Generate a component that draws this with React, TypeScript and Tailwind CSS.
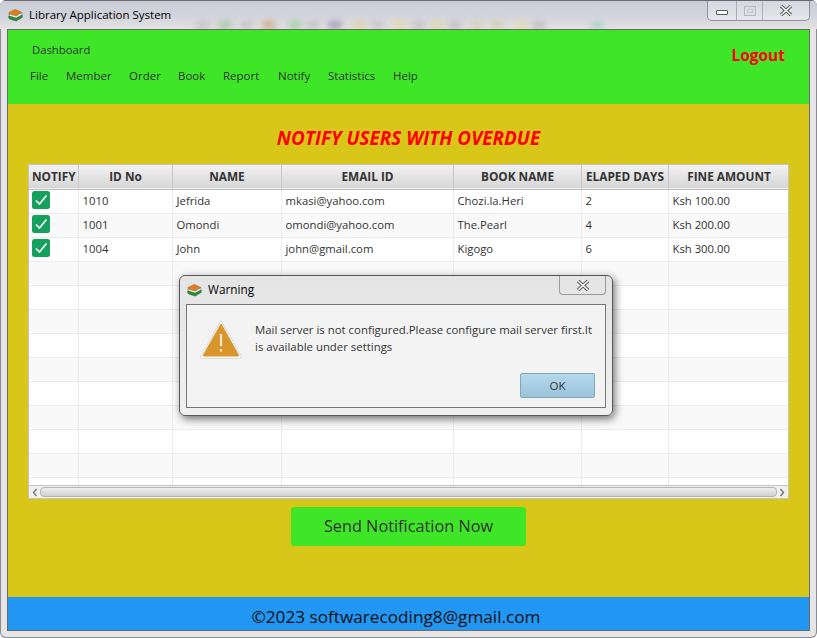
import React from 'react';

const columns = [
  { label: 'NOTIFY', width: 'w-[49px]' },
  { label: 'ID No', width: 'w-[94px]' },
  { label: 'NAME', width: 'w-[109px]' },
  { label: 'EMAIL ID', width: 'w-[172px]' },
  { label: 'BOOK NAME', width: 'w-[128px]' },
  { label: 'ELAPED DAYS', width: 'w-[87px]' },
  { label: 'FINE AMOUNT', width: 'w-[121px]' },
];

const rows = [
  ['1010', 'Jefrida', 'mkasi@yahoo.com', 'Chozi.la.Heri', '2', 'Ksh 100.00'],
  ['1001', 'Omondi', 'omondi@yahoo.com', 'The.Pearl', '4', 'Ksh 200.00'],
  ['1004', 'John', 'john@gmail.com', 'Kigogo', '6', 'Ksh 300.00'],
];

const menu = [
  { label: 'File', width: 'w-[36px]' },
  { label: 'Member', width: 'w-[63px]' },
  { label: 'Order', width: 'w-[49px]' },
  { label: 'Book', width: 'w-[45px]' },
  { label: 'Report', width: 'w-[55px]' },
  { label: 'Notify', width: 'w-[50px]' },
  { label: 'Statistics', width: 'w-[65px]' },
  { label: 'Help', width: 'w-[40px]' },
];

// blurred desktop showing through the glass title bar
const glassBlobs = [
  'left-[196px] bg-[#b9b9b9]',
  'left-[218px] bg-[#8fc08f]',
  'left-[240px] bg-[#bdbdbd]',
  'left-[262px] bg-[#c99b6c]',
  'left-[288px] bg-[#90c890]',
  'left-[306px] bg-[#b9b9b9]',
  'left-[328px] bg-[#8f86a8]',
  'left-[352px] bg-[#e0cc94]',
  'left-[370px] bg-[#bdbdbd]',
  'left-[392px] bg-[#e6d49a]',
  'left-[412px] bg-[#b9b9b9]',
  'left-[430px] bg-[#e0d098]',
  'left-[448px] bg-[#b4b4b4]',
  'left-[470px] bg-[#d4cfa0]',
  'left-[490px] bg-[#cfc99c]',
  'left-[514px] bg-[#e6d8a4]',
  'left-[532px] bg-[#b4b4b4]',
  'left-[590px] bg-[#a4cfc0]',
];

const BookIcon = () => (
  <svg width="15" height="13" viewBox="0 0 15 13" className="shrink-0">
    <path d="M1 3.5 L6.5 0.8 Q7.5 0.4 8.5 0.9 L14 3.6 L8.2 7 L1 5.5 Z" fill="#e07f1f" stroke="#a35a14" strokeWidth="0.5" />
    <path d="M1 5 L8.2 7 L14 3.8 L14 6 L8.2 9.2 L1.4 7.4 Z" fill="#f3f2ea" stroke="#5c6a5c" strokeWidth="0.4" />
    <path d="M0.8 7 L8.2 9.2 L14.2 6 L14.2 8.4 L8.2 12 L1.6 10 Q0.2 8.6 0.8 7 Z" fill="#2c8f3f" stroke="#175a25" strokeWidth="0.5" />
  </svg>
);

const Check = () => (
  <svg width="18" height="18" viewBox="0 0 18 18" className="block">
    <rect width="18" height="18" rx="2.5" fill="#16a05d" />
    <path d="M4 9.5 L7.5 13 L14.5 4.5" fill="none" stroke="#fff" strokeWidth="1.6" />
  </svg>
);

const WarningIcon = () => (
  <svg width="44" height="41" viewBox="0 0 44 41">
    <path d="M22 1.5 L42.5 37 Q43 39.5 40.5 39.5 L3.5 39.5 Q1 39.5 1.5 37 Z" fill="#f9f8f5" stroke="#d9d9d9" strokeWidth="1" strokeLinejoin="round" />
    <path d="M22 5 L39.5 36 Q40 37 39 37 L5 37 Q4 37 4.5 36 Z" fill="#d8952c" stroke="#d8952c" strokeWidth="1" strokeLinejoin="round" />
    <rect x="20.9" y="15" width="2.2" height="12" fill="#f6e7cc" />
    <rect x="20.9" y="30" width="2.2" height="2.6" fill="#f6e7cc" />
  </svg>
);

const CloseGlyph = () => (
  <svg width="14" height="11" viewBox="0 0 14 11">
    <path d="M2 1 L12 10 M12 1 L2 10" stroke="#555" strokeWidth="3.4" />
    <path d="M2 1 L12 10 M12 1 L2 10" stroke="#fff" strokeWidth="1.6" />
  </svg>
);

export default function App() {
  const blankRows = Array.from({ length: 10 });

  return (
    <div className="relative w-[817px] h-[638px] overflow-hidden rounded-[6px] bg-[#e6e6e8] shadow-[inset_0_0_0_1px_#8a8a90] font-['Open_Sans',sans-serif] text-[11.5px]">
      {/* Title bar */}
      <div className="relative h-[29px] flex items-center pl-[8px] gap-[6px] bg-gradient-to-b from-[#cbcdd8] via-[#d2d3dc] to-[#e2e2e2] border-t border-[#6a6a70] overflow-hidden">
        {glassBlobs.map((blob) => (
          <span key={blob} className={`absolute top-[20px] w-[14px] h-[8px] rounded-full blur-[3px] opacity-70 ${blob}`} />
        ))}
        <div className="relative shrink-0"><BookIcon /></div>
        <span className="relative text-[11.5px] text-black">Library Application System</span>
        <div className="relative ml-auto mr-[7px] self-start flex h-[20px] w-[103px] border border-t-0 border-[#8f939b] rounded-b-[5px] bg-gradient-to-b from-[#d5d8e0] to-[#e6e7ea]">
          <div className="w-[29px] flex items-center justify-center border-r border-[#a9adb5]">
            <div className="w-[12px] h-[5px] mt-[4px] bg-white border border-[#555a63] rounded-[1px]" />
          </div>
          <div className="w-[26px] flex items-center justify-center border-r border-[#a9adb5]">
            <div className="w-[12px] h-[10px] border border-[#b4b7bd] flex items-center justify-center">
              <div className="w-[6px] h-[4px] border border-[#c2c5ca]" />
            </div>
          </div>
          <div className="flex-1 flex items-center justify-center">
            <CloseGlyph />
          </div>
        </div>
      </div>

      {/* Content */}
      <div className="ml-[7px] w-[803px] h-[602px] flex flex-col border border-[#6b6b6b]">
        {/* Header */}
        <div className="h-[74px] shrink-0 bg-[#3ee627] flex justify-between text-[#333]">
          <div>
            <div className="pl-[24px] pt-[12px] leading-[16px] text-[11.3px]">Dashboard</div>
            <div className="flex pl-[22px] mt-[10px] leading-[16px]">
              {menu.map((item) => (
                <span key={item.label} className={item.width}>{item.label}</span>
              ))}
            </div>
          </div>
          <div className="pt-[15px] pr-[24px] text-[15.5px] leading-[21px] font-bold text-[#f00]">Logout</div>
        </div>

        {/* Main */}
        <div className="flex-1 bg-[#d8c618] flex flex-col items-center pt-[22px]">
          <h1 className="text-[18.9px] leading-[24px] font-bold italic text-[#f00]">NOTIFY USERS WITH OVERDUE</h1>

          <div className="mt-[14px] w-[761px] h-[335px] flex flex-col bg-white border border-[#c4c4c4]">
            <div className="h-[320px] overflow-hidden">
              <table className="table-fixed border-collapse w-[760px]">
                <thead>
                  <tr className="h-[24px] bg-gradient-to-b from-[#f2f2f2] to-[#d6d6d6] border-b border-[#bdbdbd]">
                    {columns.map((col) => (
                      <th key={col.label} className={`${col.width} p-0 pt-[1px] pl-[1px] text-[11.8px] font-bold text-[#333] text-center border-r border-[#c8c8c8] whitespace-nowrap`}>
                        {col.label}
                      </th>
                    ))}
                  </tr>
                </thead>
                <tbody className="text-[11.3px]">
                  {rows.map((row, i) => (
                    <tr key={row[0]} className={`h-[24px] ${i % 2 ? 'bg-[#f9f9f9]' : 'bg-white'} border-b border-[#ececec]`}>
                      <td className="p-0 pl-[3px] pt-[1px] align-top border-r border-[#ececec]"><Check /></td>
                      {row.map((cell) => (
                        <td key={cell} className="p-0 pl-[4px] text-[#333] border-r border-[#ececec] whitespace-nowrap">{cell}</td>
                      ))}
                    </tr>
                  ))}
                  {blankRows.map((_, i) => (
                    <tr key={i} className={`h-[24px] ${i % 2 ? 'bg-white' : 'bg-[#f9f9f9]'} border-b border-[#ececec]`}>
                      {columns.map((col) => (
                        <td key={col.label} className="p-0 border-r border-[#ececec]" />
                      ))}
                    </tr>
                  ))}
                </tbody>
              </table>
            </div>
            {/* Scrollbar */}
            <div className="h-[13px] bg-[#f0f0f0] border-t border-[#c4c4c4] flex items-center px-[3px] gap-[2px]">
              <svg width="6" height="9" viewBox="0 0 6 9"><path d="M4.5 1 L1.5 4.5 L4.5 8" fill="none" stroke="#777" strokeWidth="1.4" /></svg>
              <div className="flex-1 h-[10px] rounded-[4px] border border-[#b5b5b5] bg-gradient-to-b from-[#efefef] to-[#d0d0d0]" />
              <svg width="6" height="9" viewBox="0 0 6 9"><path d="M1.5 1 L4.5 4.5 L1.5 8" fill="none" stroke="#777" strokeWidth="1.4" /></svg>
            </div>
          </div>

          <button className="mt-[8px] w-[235px] h-[39px] rounded-[3px] bg-[#3ee627] text-[#333] text-[16.3px]">
            Send Notification Now
          </button>
        </div>

        {/* Footer */}
        <div className="h-[33px] shrink-0 bg-[#2196f3] text-center text-[#111] text-[17.2px] pt-[6px] leading-[27px] pr-[25px]">
          ©2023 softwarecoding8@gmail.com
        </div>
      </div>

      {/* Warning dialog */}
      <div className="absolute left-[179px] top-[275px] w-[434px] h-[141px] rounded-[6px] border border-[#55585c] bg-gradient-to-b from-[#e4e4e4] to-[#f0f0f0] shadow-[2px_3px_8px_rgba(0,0,0,0.55)] px-[6px] flex flex-col">
        <div className="h-[28px] flex items-center gap-[6px] pl-[1px]">
          <BookIcon />
          <span className="text-[11.8px] text-black">Warning</span>
          <div className="ml-auto self-start w-[47px] h-[19px] rounded-b-[4px] border border-t-0 border-[#9a9a9a] flex items-center justify-center">
            <CloseGlyph />
          </div>
        </div>
        <div className="h-[104px] border border-[#777] bg-[#f3f3f3] flex relative">
          <div className="pl-[12px] pt-[14px] w-[68px] shrink-0"><WarningIcon /></div>
          <p className="w-[342px] pt-[16px] text-[11.4px] text-[#333] leading-[17px]">
            Mail server is not configured.Please configure mail server first.It is available under settings
          </p>
          <button className="absolute right-[10px] bottom-[9px] w-[75px] h-[25px] rounded-[2px] border border-[#7fa8bf] bg-gradient-to-b from-[#b4d9ec] to-[#9cc3d8] text-[#333]">
            OK
          </button>
        </div>
      </div>
    </div>
  );
}
